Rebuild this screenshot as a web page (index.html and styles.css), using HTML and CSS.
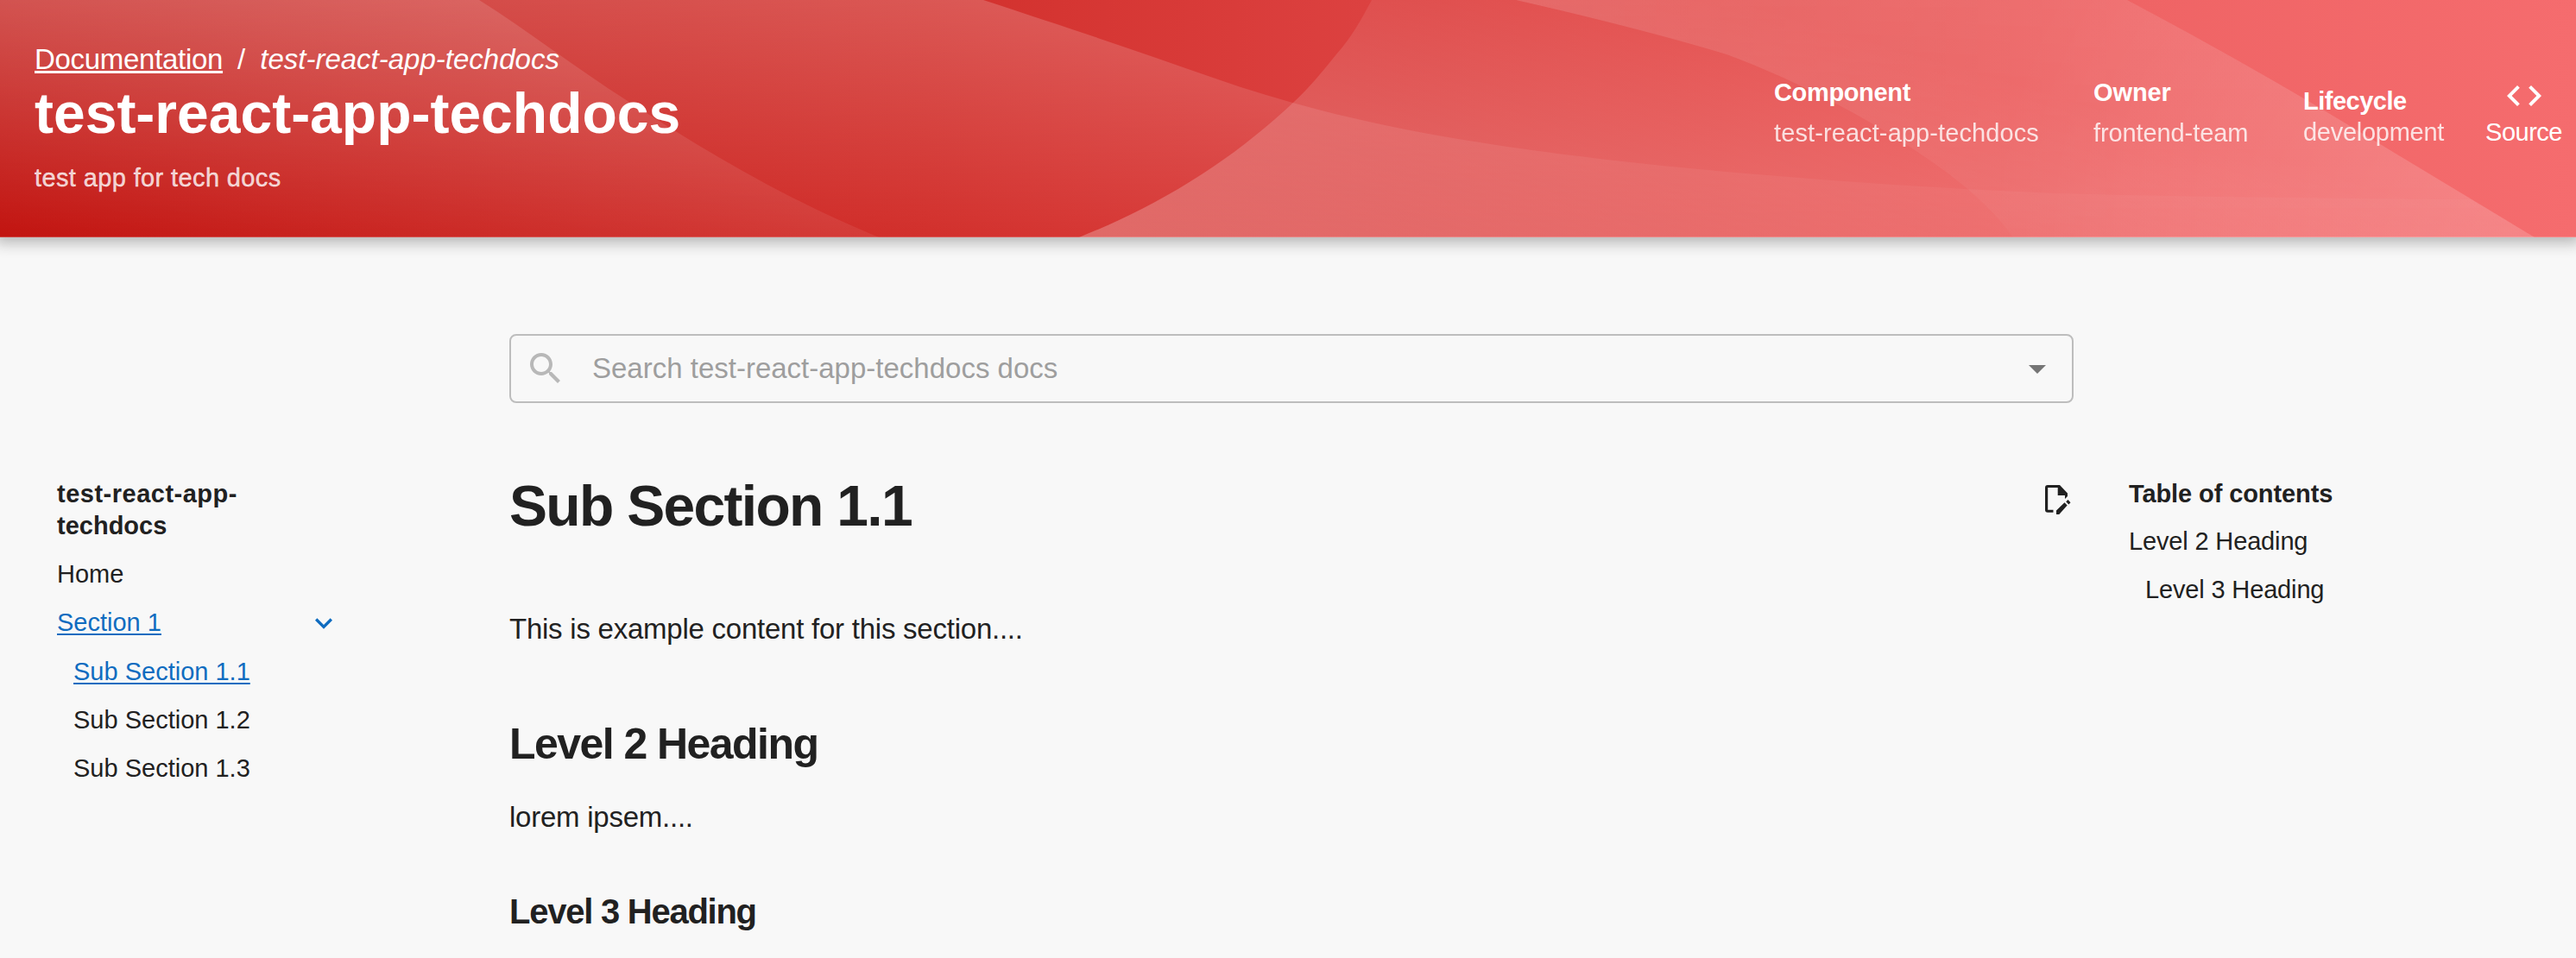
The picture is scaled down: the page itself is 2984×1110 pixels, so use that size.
FILE: index.html
```html
<!DOCTYPE html>
<html lang="en">
<head>
<meta charset="utf-8">
<title>test-react-app-techdocs</title>
<link rel="stylesheet" href="styles.css">
</head>
<body>
<header class="header">
  <svg class="waves" viewBox="0 0 2984 275" preserveAspectRatio="none" aria-hidden="true">
    <defs>
      <linearGradient id="base" x1="0" x2="1" y1="0" y2="0"><stop offset="0" stop-color="#c21410"/><stop offset=".36" stop-color="#d2302c"/><stop offset=".53" stop-color="#dc4140"/><stop offset=".67" stop-color="#e55150"/><stop offset=".83" stop-color="#ef6465"/><stop offset="1" stop-color="#f56c6e"/></linearGradient>
      <linearGradient id="left" gradientUnits="userSpaceOnUse" x1="0" y1="275" x2="71" y2="-110"><stop offset="0" stop-color="#fff" stop-opacity="0"/><stop offset="1" stop-color="#fff" stop-opacity=".14"/></linearGradient>
      <linearGradient id="low" gradientUnits="userSpaceOnUse" x1="0" y1="0" x2="0" y2="275"><stop offset="0" stop-color="#fff" stop-opacity=".19"/><stop offset="1" stop-color="#fff" stop-opacity="0"/></linearGradient>
      <linearGradient id="mid" gradientUnits="userSpaceOnUse" x1="1630" y1="-105" x2="1506" y2="332"><stop offset="0" stop-color="#fff" stop-opacity="0.02"/><stop offset="1" stop-color="#fff" stop-opacity=".25"/></linearGradient>
      <linearGradient id="right" gradientUnits="userSpaceOnUse" x1="1900" y1="0" x2="2160" y2="275"><stop offset="0" stop-color="#fff" stop-opacity=".14"/><stop offset="1" stop-color="#fff" stop-opacity=".02"/></linearGradient>
      <linearGradient id="fade" gradientUnits="userSpaceOnUse" x1="1800" y1="0" x2="2464" y2="0"><stop offset="0" stop-color="#fff" stop-opacity=".14"/><stop offset="1" stop-color="#fff" stop-opacity=".07"/></linearGradient>
      <radialGradient id="glow" gradientUnits="userSpaceOnUse" cx="2920" cy="290" r="620"><stop offset="0" stop-color="#fff" stop-opacity=".14"/><stop offset="1" stop-color="#fff" stop-opacity="0"/></radialGradient>
      <linearGradient id="falloff" gradientUnits="userSpaceOnUse" x1="0" y1="0" x2="0" y2="275"><stop offset="0" stop-color="#fff"/><stop offset="1" stop-color="#555"/></linearGradient>
      <mask id="soften"><rect width="2984" height="275" fill="url(#falloff)"/></mask>
    </defs>
    <rect width="2984" height="275" fill="url(#base)"/>
    <path fill="url(#left)" d="M0 0H555C611 35 667 79 727 117C810 170 900 226 1018 275H0Z"/>
    <path fill="url(#low)" d="M0 0H1139C1240 33 1320 60 1408 91C1499 123 1600 147 1714 165C1870 190 2120 213 2379 224Q2600 230 2862 231L2936 275H0Z"/>
    <path fill="url(#mid)" d="M1589 0C1576 24 1566 43 1548 63C1533 82 1517 101 1499 118C1430 183 1350 235 1250 275H2936C2860 229 2790 187 2724 147Q2600 72 2464 0Z"/>
    <path fill="url(#fade)" mask="url(#soften)" d="M1756 0Q1900 33 2000 63C2120 107 2230 177 2277 217Q2312 247 2332 275H2936C2860 229 2790 187 2724 147Q2600 72 2464 0Z"/>
    <path fill="url(#glow)" d="M2300 0V275H2936C2860 229 2790 187 2724 147Q2600 72 2464 0Z"/>
    <rect y="274" width="2984" height="1" fill="#fff" fill-opacity=".2"/>
  </svg>
  <div class="intro">
    <nav class="crumbs"><a class="crumb-link" href="#">Documentation</a><span>/</span><em class="crumb-current">test-react-app-techdocs</em></nav>
    <h1 class="title">test-react-app-techdocs</h1>
    <p class="subtitle">test app for tech docs</p>
  </div>
  <div class="facts">
    <div class="fact"><b class="fact-label label-component">Component</b><span class="fact-value">test-react-app-techdocs</span></div>
    <div class="fact"><b class="fact-label">Owner</b><span class="fact-value value-owner">frontend-team</span></div>
    <div class="fact fact-plain"><b class="fact-label label-cycle">Lifecycle</b><span class="fact-value value-cycle">development</span></div>
    <a class="source" href="#">
      <svg width="48" height="48" viewBox="0 0 24 24" fill="currentColor"><path d="M9.4 16.6 4.8 12l4.6-4.6L8 6l-6 6 6 6zm5.2 0 4.6-4.6-4.6-4.6L16 6l6 6-6 6z"/></svg>
      <span class="source-label">Source</span>
    </a>
  </div>
</header>
<div class="search">
  <svg width="48" height="48" viewBox="0 0 24 24" fill="#b8b8b8"><path d="M15.5 14h-.79l-.28-.27C15.41 12.59 16 11.11 16 9.5 16 5.91 13.09 3 9.5 3S3 5.91 3 9.5 5.91 16 9.5 16c1.61 0 3.09-.59 4.23-1.57l.27.28v.79l5 4.99L20.49 19zm-6 0C7.01 14 5 11.99 5 9.5S7.01 5 9.5 5 14 7.01 14 9.5 11.99 14 9.5 14z"/></svg>
  <span class="placeholder">Search test-react-app-techdocs docs</span>
  <svg width="48" height="48" viewBox="0 0 24 24" fill="#757575"><path d="m7 10 5 5 5-5z"/></svg>
</div>
<div class="page">
  <nav class="side">
    <div class="side-title site-name"><span class="name-start">test-react-app-</span><br>techdocs</div>
    <a class="item" href="#">Home</a>
    <div class="item section"><a class="active" href="#">Section 1</a><svg width="40" height="40" viewBox="0 0 24 24" fill="currentColor"><path d="M16.59 8.59 12 13.17 7.41 8.59 6 10l6 6 6-6z"/></svg></div>
    <a class="item sub active" href="#">Sub Section 1.1</a>
    <a class="item sub" href="#">Sub Section 1.2</a>
    <a class="item sub" href="#">Sub Section 1.3</a>
  </nav>
  <main class="content">
    <div class="heading-row">
      <h1 class="h1">Sub Section 1.1</h1>
      <svg class="edit" width="40" height="40" viewBox="0 0 40 40">
        <path d="M18.5 33.700H12q-3 0-3-3V5q0-3 3-3H26l9 9.500V15l-3 3V14H23.700V5H12.200V30.700H18.500Z" fill="#212121"/>
        <path d="M22 31.500 31.500 22.300l3.200 3.200L25.300 36H22ZM33.200 21.300l2.300-2.300 3 3.200-2.100 2.300Z" fill="#212121"/>
      </svg>
    </div>
    <p class="text">This is example content for this section....</p>
    <h2 class="h2">Level 2 Heading</h2>
    <p class="text lorem">lorem ipsem....</p>
    <h3 class="h3">Level 3 Heading</h3>
  </main>
  <nav class="toc">
    <div class="side-title toc-title">Table of contents</div>
    <a class="item toc-item" href="#">Level 2 Heading</a>
    <a class="item toc-item sub" href="#">Level 3 Heading</a>
  </nav>
</div>
</body>
</html>
```
FILE: styles.css
```css
* { box-sizing: border-box; }
body { margin: 0; height: 1110px; overflow: hidden; background: #f8f8f8; color: #212121; font-family: "Liberation Sans", Arial, sans-serif; }
h1, h2, h3, p { margin: 0; }
a { color: inherit; text-decoration: none; }
svg { display: block; flex: none; }

.header { position: relative; display: flex; justify-content: space-between; height: 275px; padding: 0 16px 0 40px; color: #fff; box-shadow: 0 0 16px 6px rgba(20, 20, 20, .3); }
.waves { position: absolute; inset: 0; width: 100%; height: 100%; }
.intro, .facts { position: relative; }
.intro { padding-top: 49px; }
.crumbs { display: flex; font-size: 33px; line-height: 40px; }
.crumb-link { margin-right: 17px; letter-spacing: -.3px; text-decoration: underline; text-decoration-thickness: 3px; text-underline-offset: 2px; }
.crumb-current { margin-left: 17px; }
.title { margin-top: 6px; font-size: 66px; line-height: 72px; }
.subtitle { margin-top: 21px; font-size: 29px; line-height: 36px; letter-spacing: .38px; color: rgba(255, 255, 255, .8); -webkit-text-stroke: .4px rgba(255, 255, 255, .8); }

.facts { display: grid; grid-template-columns: 370px 243px 211px 89px; align-items: start; padding-top: 87px; font-size: 29px; line-height: 35px; }
.fact { display: flex; flex-direction: column; gap: 12px; padding-top: 3px; }
.fact-plain { gap: 1px; padding-top: 13px; }
.fact-label { letter-spacing: -.1px; }
.label-component { letter-spacing: -.35px; }
.label-cycle { letter-spacing: -.5px; }
.fact-value { letter-spacing: .1px; opacity: .8; }
.value-owner { letter-spacing: -.1px; }
.value-cycle { letter-spacing: -.27px; }
.source { display: flex; flex-direction: column; align-items: center; letter-spacing: -.5px; }
.source-label { padding-top: 1px; }

.search { display: flex; align-items: center; width: 1812px; height: 80px; margin: 112px 0 0 590px; padding: 0 16px; border: 2px solid #bdbdbd; border-radius: 8px; }
.placeholder { flex: 1; margin-left: 30px; font-size: 33px; line-height: 40px; color: #9e9e9e; }

.page { display: grid; grid-template-columns: 524px 1812px 1fr; padding: 79px 0 0 66px; }
.side { width: 329px; padding-top: 8px; }
.side-title { font-size: 29px; line-height: 37px; font-weight: 700; }
.site-name { margin-bottom: 9px; }
.name-start { letter-spacing: .5px; }
.item { display: block; font-size: 29px; line-height: 56px; }
.section { display: flex; align-items: center; justify-content: space-between; height: 57px; line-height: 57px; color: #0f6cc0; }
.sub { padding-left: 19px; }
.active { color: #0f6cc0; text-decoration: underline; text-decoration-thickness: 2px; text-underline-offset: 3px; }

.heading-row { display: flex; justify-content: space-between; }
.h1 { font-size: 66px; line-height: 80px; letter-spacing: -1.7px; }
.edit { margin: 14px 2px 0 0; }
.text { margin-top: 79px; font-size: 33px; line-height: 48px; letter-spacing: -.24px; }
.h2 { margin-top: 79px; font-size: 50px; line-height: 60px; letter-spacing: -1.55px; }
.lorem { margin-top: 31px; }
.h3 { margin-top: 60px; font-size: 40px; line-height: 50px; letter-spacing: -1.25px; }

.toc { padding: 8px 0 0 64px; }
.toc-title { margin-bottom: 8px; letter-spacing: -.1px; }
.toc-item { letter-spacing: -.15px; }
```
